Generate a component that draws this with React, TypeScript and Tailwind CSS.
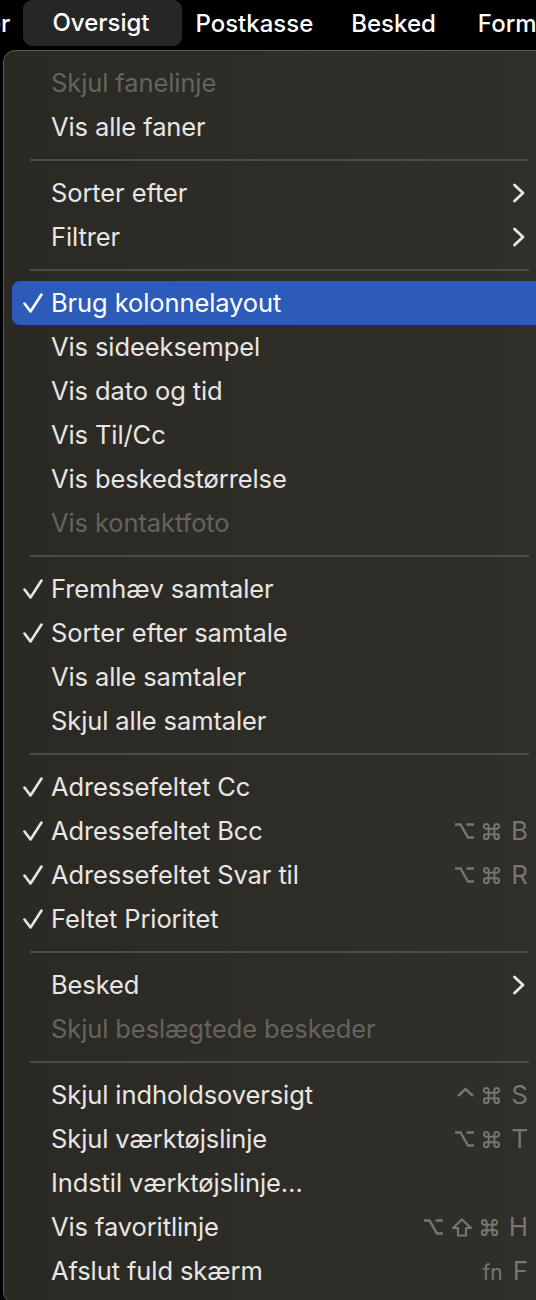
import React from 'react';

type Row =
  | 'sep'
  | {
      label: string;
      check?: boolean;
      disabled?: boolean;
      arrow?: boolean;
      keys?: string[];
      fn?: string;
      active?: boolean;
    };

const rows: Row[] = [
  { label: 'Skjul fanelinje', disabled: true },
  { label: 'Vis alle faner' },
  'sep',
  { label: 'Sorter efter', arrow: true },
  { label: 'Filtrer', arrow: true },
  'sep',
  { label: 'Brug kolonnelayout', check: true, active: true },
  { label: 'Vis sideeksempel' },
  { label: 'Vis dato og tid' },
  { label: 'Vis Til/Cc' },
  { label: 'Vis beskedstørrelse' },
  { label: 'Vis kontaktfoto', disabled: true },
  'sep',
  { label: 'Fremhæv samtaler', check: true },
  { label: 'Sorter efter samtale', check: true },
  { label: 'Vis alle samtaler' },
  { label: 'Skjul alle samtaler' },
  'sep',
  { label: 'Adressefeltet Cc', check: true },
  { label: 'Adressefeltet Bcc', check: true, keys: ['opt', 'cmd', 'B'] },
  { label: 'Adressefeltet Svar til', check: true, keys: ['opt', 'cmd', 'R'] },
  { label: 'Feltet Prioritet', check: true },
  'sep',
  { label: 'Besked', arrow: true },
  { label: 'Skjul beslægtede beskeder', disabled: true },
  'sep',
  { label: 'Skjul indholdsoversigt', keys: ['ctrl', 'cmd', 'S'] },
  { label: 'Skjul værktøjslinje', keys: ['opt', 'cmd', 'T'] },
  { label: 'Indstil værktøjslinje…' },
  { label: 'Vis favoritlinje', keys: ['opt', 'shift', 'cmd', 'H'] },
  { label: 'Afslut fuld skærm', fn: 'F' },
];

const Check = () => (
  <svg width="20" height="20" viewBox="0 0 20 20" fill="none">
    <path d="M1.5 10.5 L7.5 18.5 L18.5 1.5" stroke="currentColor" strokeWidth="2.6" strokeLinecap="round" strokeLinejoin="round" />
  </svg>
);

const Chevron = () => (
  <svg width="14" height="20" viewBox="0 0 14 20" fill="none">
    <path d="M2.5 2 L11 10 L2.5 18" stroke="currentColor" strokeWidth="2.8" strokeLinecap="round" strokeLinejoin="round" />
  </svg>
);

// modifier key glyphs, drawn to match the menu's shortcut column
const KeyGlyph = ({ k }: { k: string }) => {
  if (k === 'opt')
    return (
      <svg width="21" height="18" viewBox="0 0 21 18" fill="none">
        <path d="M1 2.5 H6.5 L14 15.5 H20 M12.5 2.5 H20" stroke="currentColor" strokeWidth="2.4" />
      </svg>
    );
  if (k === 'cmd')
    return (
      <svg width="19" height="19" viewBox="0 0 20 20" fill="none">
        <path
          d="M7 7 V4.5 A2.5 2.5 0 1 0 4.5 7 H15.5 A2.5 2.5 0 1 0 13 4.5 V15.5 A2.5 2.5 0 1 0 15.5 13 H4.5 A2.5 2.5 0 1 0 7 15.5 V7"
          stroke="currentColor"
          strokeWidth="2.1"
          strokeLinejoin="round"
        />
      </svg>
    );
  if (k === 'shift')
    return (
      <svg width="22" height="19" viewBox="0 0 22 19" fill="none">
        <path d="M11 1.5 L20 10 H15 V17.5 H7 V10 H2 Z" stroke="currentColor" strokeWidth="2.2" strokeLinejoin="round" />
      </svg>
    );
  if (k === 'ctrl')
    return (
      <svg width="19" height="19" viewBox="0 0 19 19" fill="none">
        <path d="M2 10 L9.5 3 L17 10" stroke="currentColor" strokeWidth="2.4" />
      </svg>
    );
  return <span className="text-[26px] leading-none ml-[3px]">{k}</span>;
};

const MenuRow = ({ row }: { row: Exclude<Row, 'sep'> }) => {
  const textColor = row.active ? 'text-white' : row.disabled ? 'text-[#65635e]' : 'text-[#e7e6e3]';
  return (
    <div className={`h-[44px] mx-[8px] rounded-[8px] flex items-center pr-[18px] ${row.active ? 'bg-[#2d5bb9]' : ''} ${textColor}`}>
      <div className="w-[39px] pl-[11px] flex items-center">{row.check && <Check />}</div>
      <div className="flex-1 text-[25.5px] leading-none tracking-[-0.1px] whitespace-nowrap">{row.label}</div>
      {row.arrow && (
        <div className="mr-[2px] text-[#e7e6e3]">
          <Chevron />
        </div>
      )}
      {row.keys && (
        <div className="flex items-center gap-[7px] text-[#77756f]">
          {row.keys.map((k, i) => (
            <KeyGlyph key={i} k={k} />
          ))}
        </div>
      )}
      {row.fn && (
        <div className="flex items-baseline gap-[10px] text-[#77756f] leading-none">
          <span className="text-[21px]">fn</span>
          <span className="text-[26px]">{row.fn}</span>
        </div>
      )}
    </div>
  );
};

export default function App() {
  return (
    <div className="w-[536px] h-[1300px] bg-black overflow-hidden font-['Inter',sans-serif]">
      {/* menu bar */}
      <div className="h-[48px] flex items-start text-white text-[24px] font-medium whitespace-nowrap">
        <span className="shrink-0 ml-[-13px] mt-[6px]">er</span>
        <div className="shrink-0 ml-[13px] w-[159px] h-[46px] rounded-[9px] bg-[#262626] flex items-center pl-[29px]">Oversigt</div>
        <span className="shrink-0 ml-[13px] mt-[6px]">Postkasse</span>
        <span className="shrink-0 ml-[38px] mt-[6px]">Besked</span>
        <span className="shrink-0 ml-[42px] mt-[6px]">Formater</span>
      </div>

      {/* dropdown */}
      <div className="ml-[3px] mt-[2px] w-[552px] h-[1254px] rounded-[12px] border border-[#5b5954] bg-gradient-to-r from-[#2b2924] to-[#312f2a] pt-[10px] pb-[8px]">
        {rows.map((row, i) =>
          row === 'sep' ? (
            <div key={i} className="h-[22px] flex items-center pl-[26px] pr-[25px]">
              <div className="h-[2px] w-full bg-[#4d4b46]" />
            </div>
          ) : (
            <MenuRow key={i} row={row} />
          )
        )}
      </div>
    </div>
  );
}
